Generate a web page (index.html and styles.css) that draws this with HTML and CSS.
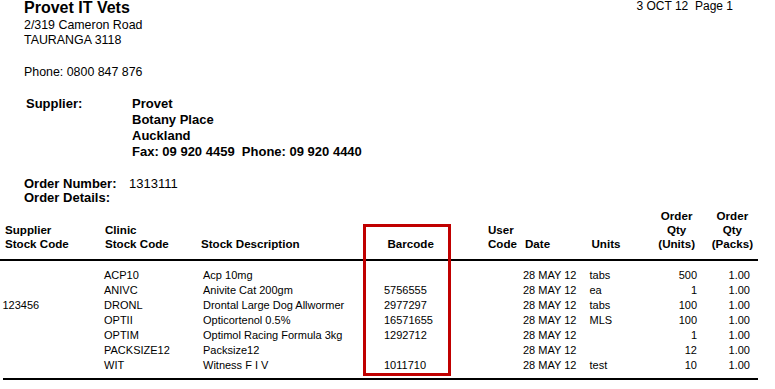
FILE: index.html
```html
<!DOCTYPE html>
<html>
<head>
<meta charset="utf-8">
<link rel="stylesheet" href="styles.css">
</head>
<body>
<div class="page">
  <div class="head">
    <div class="clinic">
      <div class="title">Provet IT Vets</div>
      <div class="addr">2/319 Cameron Road</div>
      <div class="addr">TAURANGA 3118</div>
      <div class="addr phone">Phone: 0800 847 876</div>
    </div>
    <div class="pagedate">3 OCT 12  Page 1</div>
  </div>

  <div class="supplier">
    <div class="label">Supplier:</div>
    <div class="svals">
      <div>Provet</div>
      <div>Botany Place</div>
      <div>Auckland</div>
      <div class="pre">Fax: 09 920 4459  Phone: 09 920 4440</div>
    </div>
  </div>

  <div class="order">
    <div class="label">Order Number:</div>
    <div class="oval">1313111</div>
    <div class="label">Order Details:</div>
    <div></div>
  </div>

  <div class="table">
    <div class="row thead">
      <div class="c">Supplier<br>Stock Code</div>
      <div class="c c2">Clinic<br>Stock Code</div>
      <div class="c c3">Stock Description</div>
      <div class="c c4">Barcode</div>
      <div class="c">User<br>Code</div>
      <div class="c">Date</div>
      <div class="c">Units</div>
      <div class="c num"><span class="stack">Order<br>Qty<br>(Units)</span></div>
      <div class="c num last"><span class="stack">Order<br>Qty<br>(Packs)</span></div>
    </div>
    <div class="tbody">
      <div class="row"><div></div><div>ACP10</div><div>Acp 10mg</div><div></div><div></div><div>28 MAY 12</div><div>tabs</div><div class="num">500</div><div class="num">1.00</div></div>
      <div class="row"><div></div><div>ANIVC</div><div>Anivite Cat 200gm</div><div>5756555</div><div></div><div>28 MAY 12</div><div>ea</div><div class="num">1</div><div class="num">1.00</div></div>
      <div class="row"><div>123456</div><div>DRONL</div><div>Drontal Large Dog Allwormer</div><div>2977297</div><div></div><div>28 MAY 12</div><div>tabs</div><div class="num">100</div><div class="num">1.00</div></div>
      <div class="row"><div></div><div>OPTII</div><div>Opticortenol 0.5%</div><div>16571655</div><div></div><div>28 MAY 12</div><div>MLS</div><div class="num">100</div><div class="num">1.00</div></div>
      <div class="row"><div></div><div>OPTIM</div><div>Optimol Racing Formula 3kg</div><div>1292712</div><div></div><div>28 MAY 12</div><div></div><div class="num">1</div><div class="num">1.00</div></div>
      <div class="row"><div></div><div>PACKSIZE12</div><div>Packsize12</div><div></div><div></div><div>28 MAY 12</div><div></div><div class="num">12</div><div class="num">1.00</div></div>
      <div class="row"><div></div><div>WIT</div><div>Witness F I V</div><div>1011710</div><div></div><div>28 MAY 12</div><div>test</div><div class="num">10</div><div class="num">1.00</div></div>
    </div>
    <div class="highlight"></div>
  </div>
</div>
</body>
</html>
```

FILE: styles.css
```css
html, body {
  margin: 0;
  padding: 0;
  background: #fff;
}
body {
  font-family: "Liberation Sans", Arial, sans-serif;
  color: #000;
  width: 775px;
  height: 389px;
  overflow: hidden;
}
.page {
  position: relative;
}
.head {
  display: flex;
  justify-content: space-between;
  align-items: flex-start;
  padding: 0 42px 0 24px;
}
.title {
  font-size: 16px;
  font-weight: bold;
  line-height: 16px;
}
.addr {
  font-size: 12.4px;
  line-height: 15px;
}
.title + .addr {
  margin-top: 1.5px;
}
.phone {
  margin-top: 17px;
}
.pagedate {
  font-size: 12px;
  line-height: 15px;
  white-space: pre;
  margin-top: -1px;
}
.supplier {
  display: grid;
  grid-template-columns: 106px auto;
  padding-left: 26px;
  margin-top: 16px;
  font-size: 13px;
  font-weight: bold;
  line-height: 16px;
}
.pre {
  white-space: pre;
}
.order {
  display: grid;
  grid-template-columns: 105px auto;
  padding-left: 24px;
  margin-top: 17.5px;
  font-size: 13px;
  line-height: 14px;
}
.order .label {
  font-weight: bold;
}
.table {
  position: relative;
  width: 755px;
  margin-top: 4px;
  padding-left: 3px;
}
.row {
  display: grid;
  grid-template-columns: 101px 99px 181px 102px 37px 66.5px 50.5px 57px 53px;
  white-space: nowrap;
}
.thead {
  font-size: 11.6px;
  font-weight: bold;
  line-height: 14px;
  height: 42px;
  align-items: end;
  padding-bottom: 8px;
  border-bottom: 2px solid #000;
  margin-left: -3px;
  padding-left: 3px;
}
.thead .c {
  padding-left: 2px;
}
.thead .c2 {
  padding-left: 1px;
}
.thead .c3 {
  margin-left: -2px;
  padding-left: 0;
}
.thead .c4 {
  padding-left: 3.5px;
}
.thead .num {
  display: flex;
  justify-content: flex-end;
  padding-left: 0;
  padding-right: 2px;
}
.thead .num.last {
  padding-right: 0;
  margin-right: -3px;
}
.stack {
  display: inline-block;
  text-align: center;
}
.tbody {
  font-size: 11px;
  line-height: 15px;
  padding-top: 7.3px;
  padding-bottom: 4.7px;
  border-bottom: 2px solid #000;
}
.tbody .row > div:first-child {
  margin-left: -0.5px;
}
.num {
  text-align: right;
}
.highlight {
  position: absolute;
  left: 363px;
  top: 15px;
  width: 88px;
  height: 152px;
  border: 3px solid #c00000;
  box-sizing: border-box;
}
```
